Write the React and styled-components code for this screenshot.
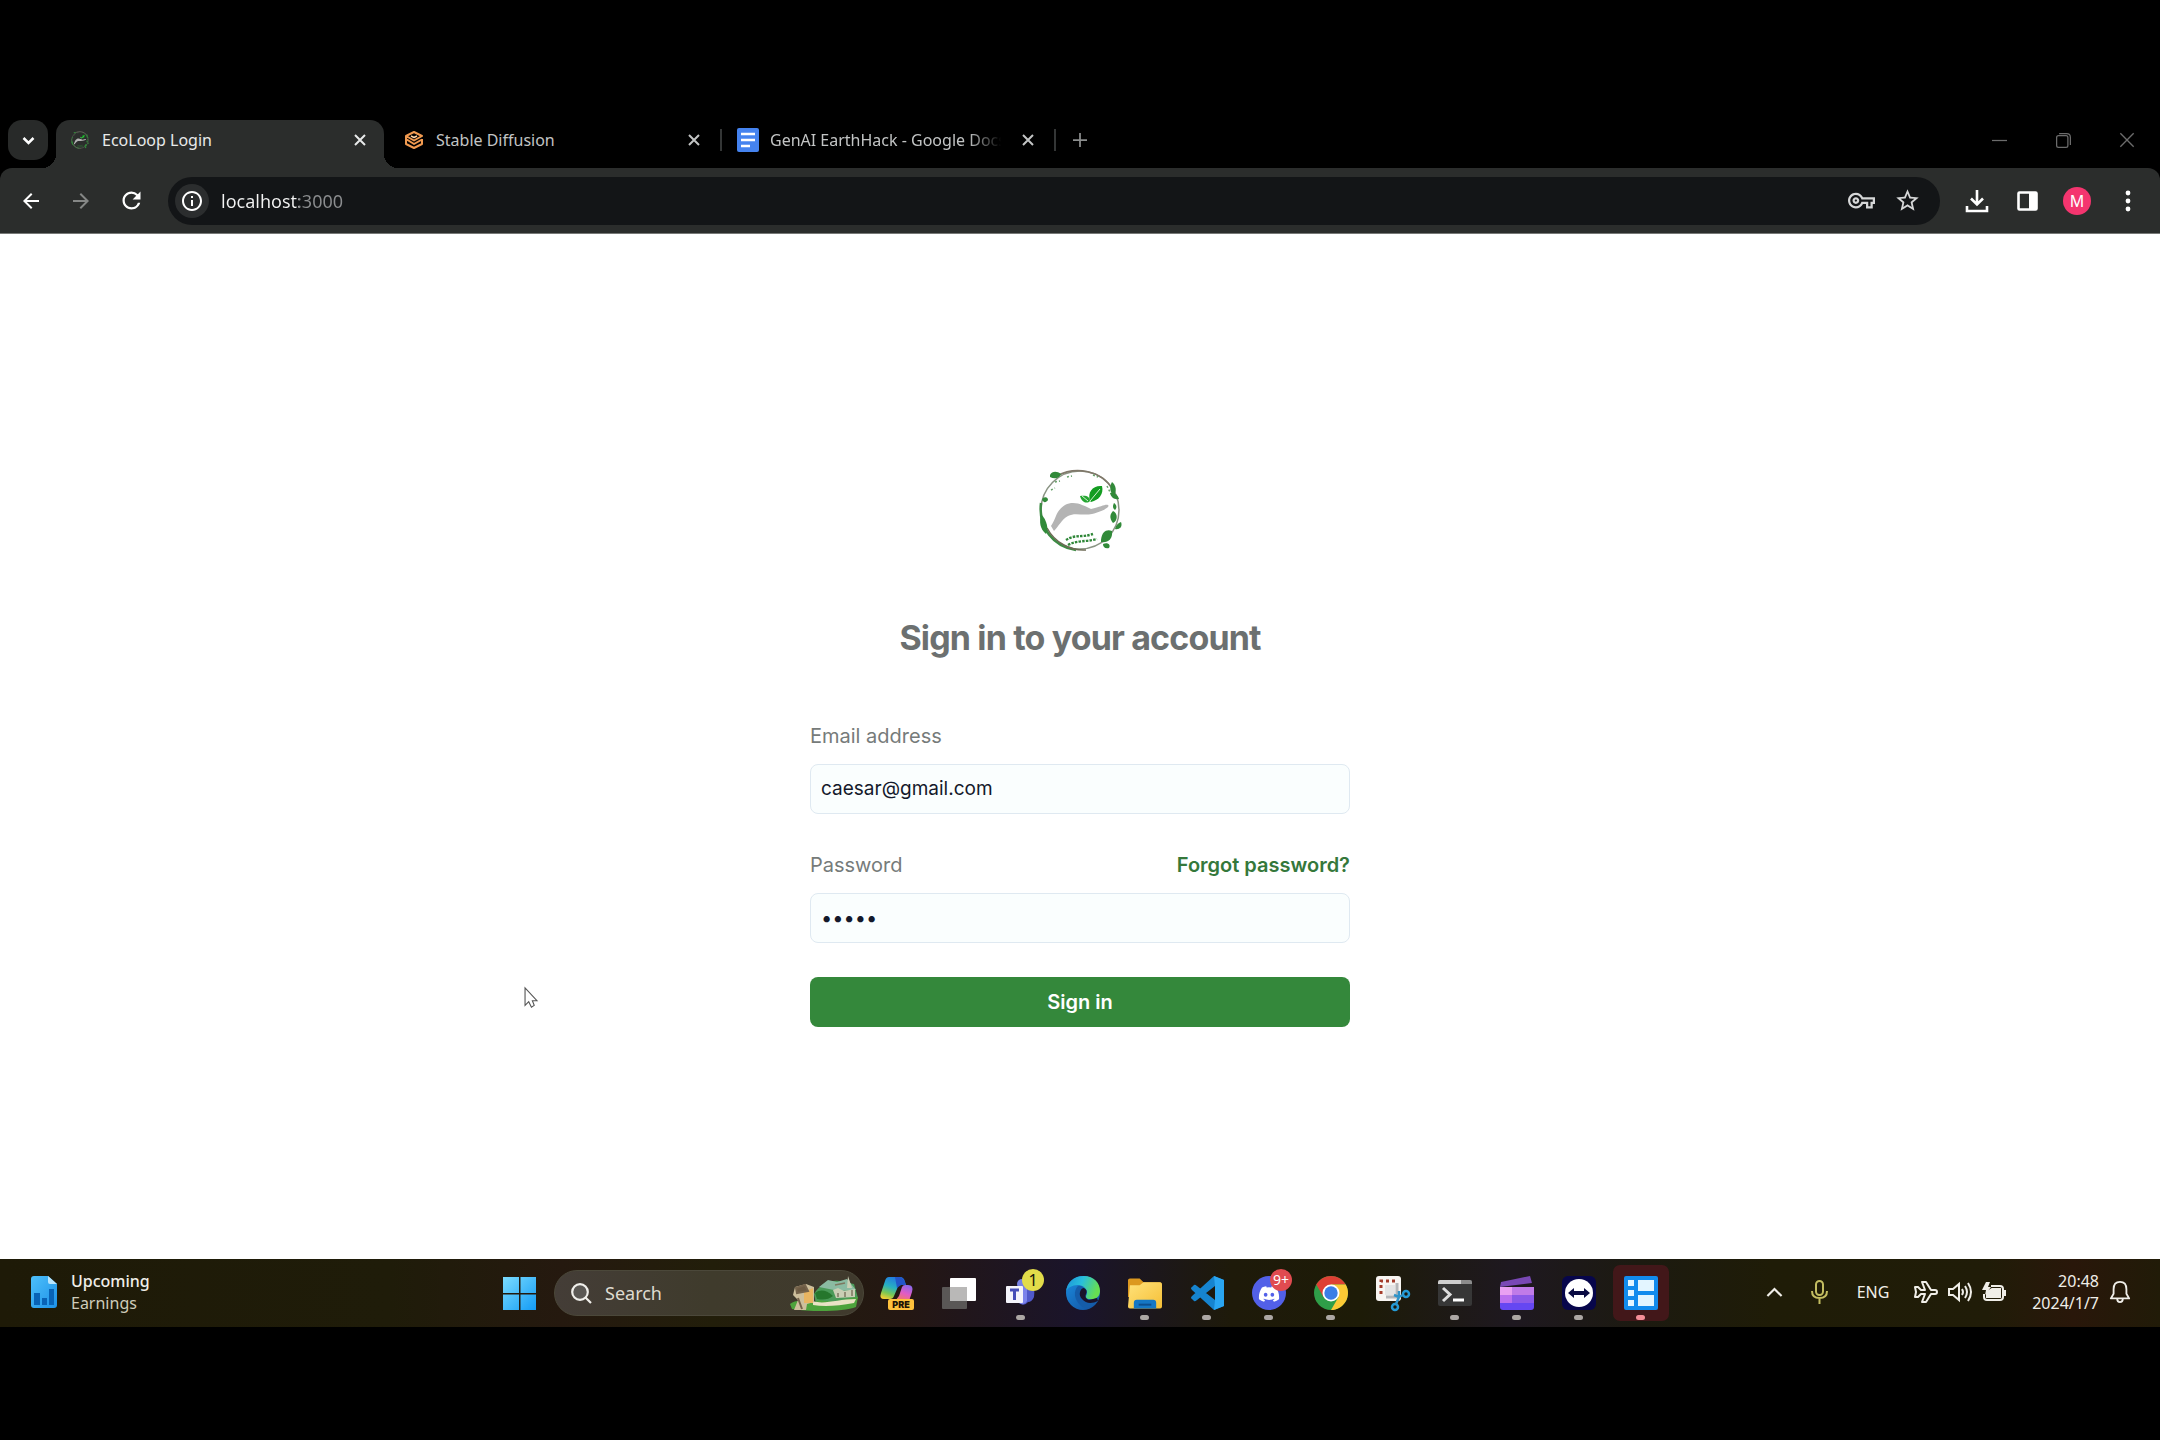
import React from "react";
import styled, { createGlobalStyle, css } from "styled-components";
import { MdArrowBack, MdArrowForward, MdRefresh, MdInfoOutline, MdStarBorder, MdOutlineVpnKey } from "react-icons/md";
import { FaDiscord } from "react-icons/fa";

const uiFont = `"Noto Sans", "Open Sans", sans-serif`;
const pageFont = `Inter, "Liberation Sans", sans-serif`;

const GlobalStyle = createGlobalStyle`
  *, *::before, *::after { box-sizing: border-box; }
  body { margin: 0; background: #000; }
  button, input { font: inherit; color: inherit; }
  svg { display: block; flex: none; overflow: visible; }
`;

const Screen = styled.div`
  min-height: 100vh;
  display: flex;
  flex-direction: column;
  padding: 120px 0 113px;
  background: #000;
  font-family: ${uiFont};
`;

/* Browser chrome */
const TabStrip = styled.header`
  display: flex;
  align-items: flex-start;
  height: 48px;
  padding-left: 8px;
  background: #000;
`;

const PlainButton = styled.button`
  display: flex;
  align-items: center;
  justify-content: center;
  flex: none;
  padding: 0;
  border: 0;
  background: transparent;
  cursor: default;
`;

const TabSearch = styled(PlainButton)`
  width: 40px;
  height: 40px;
  margin-right: 8px;
  border-radius: 14px;
  background: #282a29;
  color: #fff;
`;

const Tab = styled.div`
  position: relative;
  display: flex;
  align-items: center;
  gap: 12px;
  width: 328px;
  height: 48px;
  padding: 0 14px 8px;
  color: #c2c4c4;
  ${(p) =>
    p.$active &&
    css`
      color: #e8eaea;
      background: #2b2d2c;
      border-radius: 14px 14px 0 0;
      &::before,
      &::after {
        content: "";
        position: absolute;
        bottom: 0;
        width: 14px;
        height: 14px;
      }
      &::before {
        right: 100%;
        background: radial-gradient(circle at 0 0, transparent 14px, #2b2d2c 14px);
      }
      &::after {
        left: 100%;
        background: radial-gradient(circle at 100% 0, transparent 14px, #2b2d2c 14px);
      }
    `}
`;

const TabTitle = styled.span`
  flex: 1;
  min-width: 0;
  overflow: hidden;
  white-space: nowrap;
  font-size: 16px;
  line-height: 24px;
  ${(p) => p.$fade && css`mask-image: linear-gradient(90deg, #000 84%, transparent 98%);`}
`;

const TabClose = styled(PlainButton)`
  width: 20px;
  height: 20px;
`;

const TabDivider = styled.span`
  flex: none;
  width: 2px;
  height: 22px;
  margin: 9px 2px 0;
  background: ${(p) => (p.$hidden ? "transparent" : "#343636")};
`;

const NewTab = styled(PlainButton)`
  width: 34px;
  height: 40px;
  margin-left: 5px;
  color: #8b8d8d;
`;

const WindowControls = styled.div`
  display: flex;
  margin-left: auto;
  padding-right: 1px;
  color: #6c6c6c;
`;

const WindowButton = styled(PlainButton)`
  width: 64px;
  height: 40px;
`;

const Toolbar = styled.nav`
  display: flex;
  align-items: center;
  height: 66px;
  padding: 0 8px 0 6px;
  background: #2b2d2c;
  border-bottom: 1px solid #777977;
  border-radius: 12px 12px 0 0;
`;

const ToolButton = styled(PlainButton)`
  width: ${(p) => p.$width || 50}px;
  height: 40px;
  color: ${(p) => p.$color || "#fff"};
`;

const AddressBar = styled.div`
  flex: 1;
  min-width: 0;
  display: flex;
  align-items: center;
  height: 48px;
  margin: 0 12px;
  padding: 0 10px 0 7px;
  border-radius: 24px;
  background: #131517;
`;

const SiteInfo = styled(PlainButton)`
  width: 34px;
  height: 34px;
  margin-right: 12px;
  border-radius: 50%;
  background: #2b2d2e;
  color: #fff;
`;

const Address = styled.input`
  flex: 1;
  min-width: 0;
  height: 32px;
  padding: 0;
  border: 0;
  outline: 0;
  font-size: 18px;
  background: linear-gradient(90deg, #f4f4f4 78px, #8b8d8f 78px);
  background-clip: text;
  -webkit-text-fill-color: transparent;
`;

const Avatar = styled.span`
  display: grid;
  place-items: center;
  width: 28px;
  height: 28px;
  border-radius: 50%;
  background: #f4356f;
  color: #fff;
  font-size: 16px;
  line-height: 24px;
`;

/* Sign-in page */
const Page = styled.main`
  position: relative;
  flex: 1;
  display: flex;
  flex-direction: column;
  align-items: center;
  justify-content: center;
  gap: 56px;
  padding-bottom: 4px;
  background: #fff;
  font-family: ${pageFont};
`;

const Brand = styled.div`
  display: flex;
  flex-direction: column;
  align-items: center;
  gap: 56px;
`;

const Heading = styled.h1`
  margin: 0;
  font-size: 34px;
  line-height: 50px;
  font-weight: 700;
  letter-spacing: -0.025em;
  color: #6c7070;
`;

const Form = styled.form`
  display: flex;
  flex-direction: column;
  gap: 34px;
  width: 100%;
  max-width: 540px;
  font-size: 20px;
  line-height: 34px;
`;

const Field = styled.div`
  display: flex;
  flex-direction: column;
  gap: 11px;
`;

const FieldHead = styled.div`
  display: flex;
  justify-content: space-between;
`;

const Label = styled.label`
  color: #767b7a;
`;

const ForgotLink = styled.a`
  color: #35783b;
  font-weight: 600;
  text-decoration: none;
`;

const TextInput = styled.input`
  width: 100%;
  height: 50px;
  padding: 0 10px;
  border: 1px solid #dfe9f1;
  border-radius: 8px;
  outline: 0;
  background: #fafefe;
  color: #14192b;
  font-size: ${(p) => (p.type === "password" ? 20 : 19)}px;
`;

const SubmitButton = styled.button`
  height: 50px;
  padding: 0;
  border: 0;
  border-radius: 8px;
  background: #34883b;
  color: #fff;
  font-weight: 600;
`;

const Pointer = styled.svg`
  position: absolute;
  left: 524px;
  top: 753px;
`;

/* Taskbar */
const Taskbar = styled.footer`
  display: grid;
  grid-template-columns: 1fr auto 1fr;
  align-items: center;
  height: 68px;
  color: #f0eee8;
  background: linear-gradient(90deg, #1e1a07 0%, #1f1c09 18%, #25190f 26%, #221e0a 33%, #241713 42%, #1a142b 50%, #1e1a0a 57%, #1d1b07 63%, #1e1820 70%, #1c1a10 76%, #1f1c07 82%, #201c08 92%, #29170a 96%, #211b08 100%);
`;

const Widget = styled.button`
  display: flex;
  align-items: center;
  gap: 14px;
  justify-self: start;
  padding: 0 0 2px 31px;
  border: 0;
  background: transparent;
  text-align: left;
  font-size: 16px;
  line-height: 22px;
`;

const WidgetTitle = styled.span`
  display: block;
  font-weight: 500;
`;

const WidgetNote = styled.span`
  display: block;
  color: #cfccba;
`;

const Dock = styled.div`
  display: flex;
  align-items: center;
`;

const SearchBox = styled.label`
  display: flex;
  align-items: center;
  gap: 13px;
  width: 310px;
  height: 46px;
  margin: 0 2px 0 4px;
  padding: 0 5px 0 16px;
  border-radius: 23px;
  border: 1px solid #4b483a;
  background: linear-gradient(90deg, #443d37, #3f3b2c 50%, #403a2d);
`;

const SearchInput = styled.input`
  flex: 1;
  min-width: 0;
  padding: 0;
  border: 0;
  outline: 0;
  background: transparent;
  font-size: 18px;
  &::placeholder {
    color: #dedbd0;
    opacity: 1;
  }
`;

const DockButton = styled(PlainButton)`
  position: relative;
  width: 62px;
  height: 68px;
`;

const DockTile = styled.span`
  position: relative;
  display: grid;
  place-items: center;
  width: 56px;
  height: 56px;
  border-radius: 7px;
  background: ${(p) => (p.$active ? "#421719" : "transparent")};
`;

const RunningMark = styled.span`
  position: absolute;
  left: 26px;
  bottom: 7px;
  width: 9px;
  height: 5px;
  border-radius: 3px;
  background: ${(p) => (p.$active ? "#f58e97" : "#aca7a4")};
`;

const Badge = styled.span`
  position: absolute;
  right: 8px;
  top: 10px;
  display: grid;
  place-items: center;
  width: 22px;
  height: 22px;
  border-radius: 50%;
  background: ${(p) => p.$bg};
  color: ${(p) => p.$color};
  font-size: ${(p) => p.$font}px;
  line-height: 20px;
`;

const Tray = styled.div`
  display: flex;
  align-items: center;
  justify-self: end;
  padding: 0 25px 2px 0;
`;

const TrayButton = styled(PlainButton)`
  width: ${(p) => p.$width}px;
  height: 48px;
  font-size: 16px;
`;

const Clock = styled.time`
  width: 89px;
  padding-right: 6px;
  text-align: right;
  font-size: 16px;
  line-height: 22px;
`;

const Line = ({ size = 16, w = 2, d, ...rest }) => (
  <svg width={size} height={size} viewBox="0 0 24 24" fill="none" stroke="currentColor" strokeWidth={w} {...rest}>
    <path d={d} />
  </svg>
);

const Cross = ({ size, w }) => <Line size={size} w={w} d="M2 2 22 22M22 2 2 22" />;

const Logo = ({ size }) => (
  <svg width={size} height={size} viewBox="0 0 94 94" role="img" aria-label="EcoLoop">
    <g fill="none">
      <circle cx="47" cy="47" r="39" stroke="#8a9484" strokeWidth="1.5" />
      <path d="M8 40C5 65 21 84 43 87" stroke="#3c8b43" strokeWidth="2.5" />
      <path d="M14 65C22 80 38 88 53 87" stroke="#6d6b55" strokeWidth="1.5" />
      <path d="M24 13C42 3 69 7 80 27" stroke="#80786a" strokeWidth="1.5" />
      <path d="M22 19 27 18M34 14 39 13M60 12 65 14M18 27 22 25M74 23 77 29" stroke="#68a36b" strokeWidth="1.5" strokeDasharray="2 2" />
    </g>
    <path d="M18 63C24 54 22 49 32 42C42 37 51 43 58 46C68 44 72 41 75 42C78 44 68 49 59 51C49 53 42 49 35 53C28 57 26 63 21 68Z" fill="#b4b4b4" />
    <path d="M57 38C54 29 60 22 69 23C71 31 66 37 58 39Z" fill="#139d21" />
    <path d="M56 39C51 41 48 37 47 33C54 32 57 34 57 38Z" fill="#26a632" />
    <path d="M57 38 67 26M55 38 49 33" stroke="#d4f1d4" strokeWidth="1" />
    <g fill="#318a39">
      <path d="M17 12C19 8 24 8 28 11C26 16 21 16 17 14Z" />
      <path d="M79 19C83 22 84 28 81 33C77 30 76 24 79 19Z" />
      <path d="M77 30C81 29 85 32 86 36C81 37 78 34 77 30Z" />
      <path d="M80 48C85 50 85 58 80 60C76 55 77 51 80 48Z" />
      <path d="M88 59C90 64 86 67 82 66C83 62 85 60 88 59Z" />
      <path d="M68 77C69 68 74 66 79 68C80 76 75 80 68 79Z" />
      <path d="M70 81C75 79 78 82 76 85C72 86 70 84 70 81Z" />
      <path d="M8 51C14 57 16 67 13 71C7 66 6 59 8 51Z" />
      <path d="M9 36C12 33 15 34 15 37C13 40 10 40 9 36Z" />
      <path d="M81 40C84 42 84 45 82 47C79 45 80 42 81 40Z" />
    </g>
    <path d="M33 77C42 71 48 75 60 71M35 82C44 77 53 79 64 76" fill="none" stroke="#2f8738" strokeWidth="2.400" strokeDasharray="2.500 1.200" />
  </svg>
);

const DiffusionIcon = () => (
  <svg width="20" height="20" viewBox="0 0 20 20" fill="none" stroke="#f19a50" strokeWidth="2" strokeLinejoin="round">
    <path d="M10 2 18 6 10 10.500 2 6ZM2 6V9L10 14 18 9.500M2 9V14L10 18 18 14V9" />
    <path d="M7 6 10 7.500 13 6" stroke="#ffd3a6" strokeWidth="1.500" />
  </svg>
);

const DocsIcon = () => (
  <svg width="20" height="22" viewBox="0 0 20 22">
    <rect x="-1" y="-1" width="22" height="24" rx="2" fill="#4583ef" />
    <path d="M3 5H17M3 11H17M3 17H12" stroke="#fff" strokeWidth="2.500" />
  </svg>
);

const DownloadIcon = () => (
  <svg width="24" height="24" viewBox="0 0 24 24" fill="none" stroke="currentColor" strokeWidth="2.600">
    <path d="M12 1V15M6 9.500 12 15.500 18 9.500M2 17V22H22V17" />
  </svg>
);

const PanelIcon = () => (
  <svg width="21" height="20" viewBox="0 0 21 20">
    <rect x="1.500" y="1.500" width="18" height="17" rx="1" fill="none" stroke="currentColor" strokeWidth="2.600" />
    <path d="M12 1H20V19H12Z" fill="currentColor" />
  </svg>
);

const MoreIcon = () => (
  <svg width="20" height="22" viewBox="0 0 20 22" fill="currentColor">
    <circle cx="11" cy="3" r="2.400" /><circle cx="11" cy="11" r="2.400" /><circle cx="11" cy="19" r="2.400" />
  </svg>
);

const EarningsIcon = () => (
  <svg width="26" height="32" viewBox="0 0 26 32">
    <defs>
      <linearGradient id="doc" x2="1" y2="1"><stop stopColor="#4dc0fb" /><stop offset="1" stopColor="#1d91e8" /></linearGradient>
    </defs>
    <path d="M3 0H17L26 8V29Q26 32 23 32H3Q0 32 0 29V3Q0 0 3 0Z" fill="url(#doc)" />
    <path d="M17 0 26 8H19Q17 8 17 6Z" fill="#b8e6ff" />
    <path d="M3 17H9V29H3ZM11 22H16V29H11ZM18 13H23V29H18Z" fill="#0863b7" />
  </svg>
);

const StartIcon = () => (
  <svg width="33" height="33" viewBox="0 0 33 33">
    <defs>
      <linearGradient id="start" gradientUnits="userSpaceOnUse" x2="33" y2="33"><stop stopColor="#7bdcff" /><stop offset="1" stopColor="#139bf5" /></linearGradient>
    </defs>
    <path d="M0 0H16V16H0ZM17.500 0H33V16H17.500ZM0 17.500H16V33H0ZM17.500 17.500H33V33H17.500Z" fill="url(#start)" />
  </svg>
);

const LandscapeArt = () => (
  <svg width="68" height="35" viewBox="0 0 68 35">
    <path d="M24 18C30 8 40 4 49 5L64 8 68 22 60 28H26Z" fill="#4a9a58" />
    <path d="M29 11 38 4 47 6 57 3 66 14 49 15Z" fill="#8bbba2" />
    <path d="M0 28C10 20 20 30 30 24C44 28 56 22 68 21L66 31C54 36 20 36 2 33Z" fill="#4da33c" />
    <path d="M23 25C34 29 48 23 66 23L64 27C48 30 34 31 23 29Z" fill="#e9e2c4" />
    <path d="M5 11 16 8 24 11V26L17 28 16 34H4L8 24 3 19Z" fill="#cdbf9c" />
    <path d="M14 16 23 12V27H14Z" fill="#e9b561" />
    <path d="M6 12 15 9 18 15 7 17ZM8 22 12 33" fill="#6c5a42" stroke="#75634b" strokeWidth="2" />
    <path d="M25 17Q33 11 43 20Q37 25 27 23Z" fill="#25762c" />
    <path d="M43 14 48 12 54 15 65 13V21L46 22ZM58 0 62 12H57Z" fill="#c9cfb4" />
    <path d="M48 17V21M55 16V21M62 14V20M45 9 55 7" stroke="#7e7860" strokeWidth="1.500" />
  </svg>
);

const CopilotIcon = () => (
  <svg width="34" height="34" viewBox="0 0 34 34">
    <defs>
      <linearGradient id="copA" x1="0.600" x2="0.200" y2="1"><stop stopColor="#2276e3" /><stop offset="0.450" stopColor="#27b0c1" /><stop offset="0.750" stopColor="#7bc753" /><stop offset="1" stopColor="#f4cf32" /></linearGradient>
      <linearGradient id="copB" x1="0.700" x2="0.300" y2="1"><stop stopColor="#8b69ea" /><stop offset="0.500" stopColor="#e15bc5" /><stop offset="1" stopColor="#f47b5b" /></linearGradient>
    </defs>
    <path d="M9 1H20Q24 1 25 6L26 9H21Q18 9 17 13L14 20Q13 23 10 23H4Q-1 23 1 17L5 5Q6 1 9 1Z" fill="url(#copA)" />
    <path d="M19 1Q23 1 25 6L26 9H21L17 12 15 1Z" fill="#2355c8" />
    <path d="M25 9H28Q34 9 32 16L29 25H15L19 20 22 11Q23 9 25 9Z" fill="url(#copB)" />
    <rect x="8" y="23" width="26" height="11" rx="2" fill="#ffc13c" />
    <text x="21" y="32" textAnchor="middle" fontSize="9" fontWeight="900" fontFamily="Inter, sans-serif" fill="#221407">PRE</text>
  </svg>
);

const TaskViewIcon = () => (
  <svg width="34" height="32" viewBox="0 0 34 32">
    <rect x="0" y="10" width="25" height="22" rx="1" fill="#5a5756" />
    <rect x="8" y="1" width="26" height="23" rx="1" fill="#fff" />
    <path d="M8 10H25V24H8Z" fill="#b9b8b7" />
  </svg>
);

const TeamsIcon = () => (
  <svg width="30" height="28" viewBox="0 0 30 28">
    <circle cx="16" cy="5" r="5" fill="#7680e4" />
    <path d="M10 8H27Q29 8 28 18Q26 23 22 23Q18 28 13 24Z" fill="#5059c9" />
    <path d="M12 8H21V22Q18 28 12 23Z" fill="#7b83eb" />
    <rect x="0" y="7" width="17" height="17" rx="1" fill="#f4f4fb" />
    <path d="M4 11H13M8.500 11V21" stroke="#464eb8" strokeWidth="3" />
  </svg>
);

const EdgeIcon = () => (
  <svg width="34" height="34" viewBox="0 0 34 34">
    <defs>
      <linearGradient id="edgeA" x2="1" y2="0.300"><stop stopColor="#1b91da" /><stop offset="0.500" stopColor="#29bfdb" /><stop offset="1" stopColor="#66df52" /></linearGradient>
      <linearGradient id="edgeB" x2="1" y2="1"><stop stopColor="#1b8de0" /><stop offset="1" stopColor="#124e9c" /></linearGradient>
    </defs>
    <circle cx="17" cy="17" r="17" fill="url(#edgeB)" />
    <path d="M0 16C1 6 8 0 18 0C28 0 34 7 34 15C34 21 29 24 24 23C20 23 19 21 21 18C22 13 17 9 12 9C6 9 1 12 0 16Z" fill="url(#edgeA)" />
    <path d="M12 10C7 15 8 24 15 30C19 34 27 31 31 26C33 24 31 23 28 25C21 28 13 23 14 16Q15 12 18 12Q15 9 12 10Z" fill="#155ca9" />
    <path d="M14 16Q15 12 18 12Q22 14 20 18Q18 22 23 24L31 22L32 25Q22 30 16 23Q13 20 14 16Z" fill="#1a142b" />
  </svg>
);

const FolderIcon = () => (
  <svg width="34" height="32" viewBox="0 0 35 32">
    <defs><linearGradient id="fold" x2="1" y2="1"><stop stopColor="#ffe27b" /><stop offset="1" stopColor="#f5bf36" /></linearGradient></defs>
    <path d="M2 1H12L16 5H32Q35 5 35 8V20H0V3Q0 1 2 1Z" fill="#dc981f" />
    <path d="M2 8H12L16 5H33Q35 5 35 8V30Q35 32 33 32H2Q0 32 0 30Z" fill="url(#fold)" />
    <path d="M6 32V26Q6 23 9 23H26Q29 23 29 26V32Z" fill="#1577c5" />
    <path d="M11 28H24" stroke="#0e4f8f" strokeWidth="2" />
  </svg>
);

const CodeIcon = () => (
  <svg width="34" height="34" viewBox="0 0 34 34">
    <path d="M24 0 34 4V30L24 34 2 14Q0 12 2 11L4 9Q5 8 7 10L25 24V10L7 24Q5 26 4 25L2 23Q0 22 2 20Z" fill="#1684cf" />
    <path d="M24 0 34 4V30L24 34 25 24V10Z" fill="#2aa6f2" />
  </svg>
);

const DiscordIcon = () => (
  <svg width="34" height="34" viewBox="0 0 34 34">
    <circle cx="17" cy="17" r="17" fill="#5260e8" />
    <FaDiscord x="6" y="7" size="22" color="#fff" />
  </svg>
);

const ChromeIcon = () => (
  <svg width="34" height="34" viewBox="0 0 34 34">
    <circle cx="17" cy="17" r="17" fill="#2f9e48" />
    <path d="M2.300 8.500A17 17 0 0 1 31.700 8.500H17L9.600 21.200Z" fill="#de4034" />
    <path d="M31.700 8.500A17 17 0 0 1 17 34L24.400 21.200 17 8.500Z" fill="#fbc935" />
    <circle cx="17" cy="17" r="8.500" fill="#fff" /><circle cx="17" cy="17" r="6.700" fill="#3b7ee6" />
  </svg>
);

const SnipIcon = () => (
  <svg width="34" height="34" viewBox="0 0 34 34" fill="none">
    <rect x="0" y="0" width="25" height="25" rx="3" fill="#f8f5f2" />
    <path d="M5 18V5H20" stroke="#a43c2b" strokeWidth="3" strokeDasharray="3 3" />
    <path d="M9 9H19V19H9Z" fill="#e4e4e4" />
    <path d="M21 7V21H10" stroke="#b4b6b8" strokeWidth="3" />
    <circle cx="30" cy="18" r="3" stroke="#259bd7" strokeWidth="2.500" /><circle cx="19" cy="31" r="3" stroke="#259bd7" strokeWidth="2.500" />
    <path d="M20 28 23 21 27 19M23 21 18 19M23 21V15" stroke="#2f94c9" strokeWidth="2.500" />
  </svg>
);

const TerminalIcon = () => (
  <svg width="34" height="26" viewBox="0 0 34 26">
    <rect width="34" height="26" rx="2" fill="#373737" />
    <path d="M2 0H23V4H0V2Q0 0 2 0Z" fill="#cfcfcf" /><path d="M23 0H32Q34 0 34 2V4H23Z" fill="#8d8d8d" />
    <path d="M5 8 12 14.500 5 21" fill="none" stroke="#dedede" strokeWidth="3" /><path d="M15 20H26" stroke="#fff" strokeWidth="3" />
  </svg>
);

const ClipIcon = () => (
  <svg width="34" height="34" viewBox="0 0 34 34">
    <path d="M1 6 30 0 32 7 0 11Z" fill="#7948b5" />
    <path d="M0 11H34V19H0Z" fill="#c07be8" /><path d="M0 11H12V19H0Z" fill="#e9a0f2" />
    <path d="M0 19H34V27H0Z" fill="#8b59e8" /><path d="M0 19H12V27H0Z" fill="#bb70ee" />
    <path d="M0 27H34V31Q34 34 31 34H3Q0 34 0 31Z" fill="#6547f2" />
  </svg>
);

const ViewerIcon = () => (
  <svg width="34" height="34" viewBox="0 0 34 34">
    <rect width="34" height="34" rx="6" fill="#07064b" /><circle cx="17" cy="17" r="14" fill="#fff" />
    <path d="M6 17 12 12V15H22V12L28 17 22 22V19H12V22Z" fill="#090a42" />
  </svg>
);

const PanelsIcon = () => (
  <svg width="34" height="34" viewBox="0 0 34 34">
    <rect width="34" height="34" rx="2" fill="#128bed" />
    <path d="M4 4H10V10H4ZM4 14H10V20H4ZM4 24H10V30H4ZM14 4H30V15H14ZM14 19H30V30H14Z" fill="#e3f5ff" />
  </svg>
);

const apps = [
  { name: "Copilot", icon: <CopilotIcon /> },
  { name: "Task view", icon: <TaskViewIcon /> },
  { name: "Teams", icon: <TeamsIcon />, running: true, badge: <Badge $bg="#e2dc4a" $color="#16150a" $font={16}>1</Badge> },
  { name: "Edge", icon: <EdgeIcon /> },
  { name: "File Explorer", icon: <FolderIcon />, running: true },
  { name: "Visual Studio Code", icon: <CodeIcon />, running: true },
  { name: "Discord", icon: <DiscordIcon />, running: true, badge: <Badge $bg="#e04b50" $color="#fff" $font={14}>9+</Badge> },
  { name: "Chrome", icon: <ChromeIcon />, running: true },
  { name: "Snipping Tool", icon: <SnipIcon /> },
  { name: "Terminal", icon: <TerminalIcon />, running: true },
  { name: "Clipchamp", icon: <ClipIcon />, running: true },
  { name: "TeamViewer", icon: <ViewerIcon />, running: true },
  { name: "Recorder", icon: <PanelsIcon />, running: true, active: true },
];

const tabs = [
  { title: "EcoLoop Login", icon: <Logo size={20} />, active: true },
  { title: "Stable Diffusion", icon: <DiffusionIcon /> },
  { title: "GenAI EarthHack - Google Docs", icon: <DocsIcon />, fade: true },
];

export default function App() {
  return (
    <Screen>
      <GlobalStyle />
      <TabStrip>
        <TabSearch aria-label="Search tabs"><Line size={15} w={4} d="M4 8 12 16 20 8" /></TabSearch>
        {tabs.map((tab) => (
          <React.Fragment key={tab.title}>
            <Tab $active={tab.active}>
              {tab.icon}
              <TabTitle $fade={tab.fade}>{tab.title}</TabTitle>
              <TabClose aria-label={`Close ${tab.title}`}><Cross size={12} w={4} /></TabClose>
            </Tab>
            <TabDivider $hidden={tab.active} />
          </React.Fragment>
        ))}
        <NewTab aria-label="New tab"><Line size={14} w={3} d="M12 0V24M0 12H24" /></NewTab>
        <WindowControls>
          <WindowButton aria-label="Minimize"><Line size={15} w={2} d="M0 12H24" /></WindowButton>
          <WindowButton aria-label="Restore">
            <Line size={15} w={2} d="M4 4H16Q19 4 19 7V20Q19 23 16 23H4Q1 23 1 20V7Q1 4 4 4ZM5 1H17Q23 1 23 7V19" />
          </WindowButton>
          <WindowButton aria-label="Close window"><Cross size={16} w={2} /></WindowButton>
        </WindowControls>
      </TabStrip>
      <Toolbar>
        <ToolButton aria-label="Back"><MdArrowBack size={24} /></ToolButton>
        <ToolButton aria-label="Forward" $color="#858786"><MdArrowForward size={24} /></ToolButton>
        <ToolButton aria-label="Reload"><MdRefresh size={27} /></ToolButton>
        <AddressBar>
          <SiteInfo aria-label="Site information"><MdInfoOutline size={24} /></SiteInfo>
          <Address aria-label="Address" defaultValue="localhost:3000" />
          <ToolButton $width={46} $color="#d6d7d8" aria-label="Passwords"><MdOutlineVpnKey size={27} /></ToolButton>
          <ToolButton $width={46} $color="#d6d7d8" aria-label="Bookmark"><MdStarBorder size={27} /></ToolButton>
        </AddressBar>
        <ToolButton aria-label="Downloads"><DownloadIcon /></ToolButton>
        <ToolButton aria-label="Side panel"><PanelIcon /></ToolButton>
        <ToolButton aria-label="Profile"><Avatar>M</Avatar></ToolButton>
        <ToolButton aria-label="Menu"><MoreIcon /></ToolButton>
      </Toolbar>

      <Page>
        <Brand>
          <Logo size={94} />
          <Heading>Sign in to your account</Heading>
        </Brand>
        <Form onSubmit={(e) => e.preventDefault()}>
          <Field>
            <Label htmlFor="email">Email address</Label>
            <TextInput id="email" type="email" defaultValue="caesar@gmail.com" />
          </Field>
          <Field>
            <FieldHead>
              <Label htmlFor="password">Password</Label>
              <ForgotLink href="#forgot">Forgot password?</ForgotLink>
            </FieldHead>
            <TextInput id="password" type="password" defaultValue="earth" />
          </Field>
          <SubmitButton type="submit">Sign in</SubmitButton>
        </Form>
        <Pointer width="14" height="22" viewBox="0 0 15 24" aria-hidden="true">
          <path d="M1 1V20L5 16 8 22 11 20 9 15H14Z" fill="#fff" stroke="#555" strokeWidth="1.200" />
        </Pointer>
      </Page>

      <Taskbar>
        <Widget>
          <EarningsIcon />
          <span>
            <WidgetTitle>Upcoming</WidgetTitle>
            <WidgetNote>Earnings</WidgetNote>
          </span>
        </Widget>
        <Dock>
          <DockButton aria-label="Start"><StartIcon /></DockButton>
          <SearchBox>
            <svg width="21" height="21" viewBox="0 0 21 21" fill="none" stroke="#f0efeb" strokeWidth="2.200">
              <circle cx="9" cy="9" r="7.800" fill="#5b5854" /><path d="M14.500 14.500 20 20" />
            </svg>
            <SearchInput aria-label="Search" placeholder="Search" />
            <LandscapeArt />
          </SearchBox>
          {apps.map((app) => (
            <DockButton key={app.name} aria-label={app.name}>
              <DockTile $active={app.active}>{app.icon}</DockTile>
              {app.running && <RunningMark $active={app.active} />}
              {app.badge}
            </DockButton>
          ))}
        </Dock>
        <Tray>
          <TrayButton $width={44} aria-label="Hidden icons"><Line size={17} w={3} d="M2 17 12 7 22 17" /></TrayButton>
          <TrayButton $width={46} aria-label="Microphone">
            <svg width="17" height="24" viewBox="0 0 17 24" fill="none" stroke="#c3bd61" strokeWidth="2">
              <rect x="5" y="1" width="7" height="14" rx="3.500" /><path d="M1 11Q1 18 8.500 18Q16 18 16 11M8.500 18V24" />
            </svg>
          </TrayButton>
          <TrayButton $width={62}>ENG</TrayButton>
          <TrayButton $width={44} aria-label="Airplane mode">
            <Line size={24} w={2} strokeLinejoin="round" d="M1 7H4L7 10H11L8 2H12L17 10H21Q23 10 23 12Q23 14 21 14H17L12 22H8L11 14H7L4 17H1L2 12Z" />
          </TrayButton>
          <TrayButton $width={24} aria-label="Volume">
            <Line size={24} w={2} d="M1 9V15H5L11 20V4L5 9ZM14 9Q16 12 14 15M17 6Q21 12 17 18M20 3Q26 12 20 21" />
          </TrayButton>
          <TrayButton $width={44} aria-label="Battery">
            <svg width="24" height="20" viewBox="0 0 24 20" fill="none" stroke="currentColor" strokeWidth="2">
              <path d="M9 4H18Q21 4 21 7V15Q21 18 18 18H5Q2 18 2 15V12" /><path d="M5 10 10 7H18V15H5Z" fill="currentColor" />
              <path d="M22 8H24V14H22Z" fill="currentColor" stroke="none" /><path d="M4 0 0 8H4L3 13 9 5H6L8 0Z" fill="currentColor" stroke="none" />
            </svg>
          </TrayButton>
          <Clock dateTime="2024-01-07T20:48">20:48<br />2024/1/7</Clock>
          <TrayButton $width={30} aria-label="Notifications">
            <Line size={22} w={2} strokeLinejoin="round" d="M12 1Q5 1 5 9V14L2 19H22L19 14V9Q19 1 12 1ZM9 20Q9 23 12 23Q15 23 15 20" />
          </TrayButton>
        </Tray>
      </Taskbar>
    </Screen>
  );
}
